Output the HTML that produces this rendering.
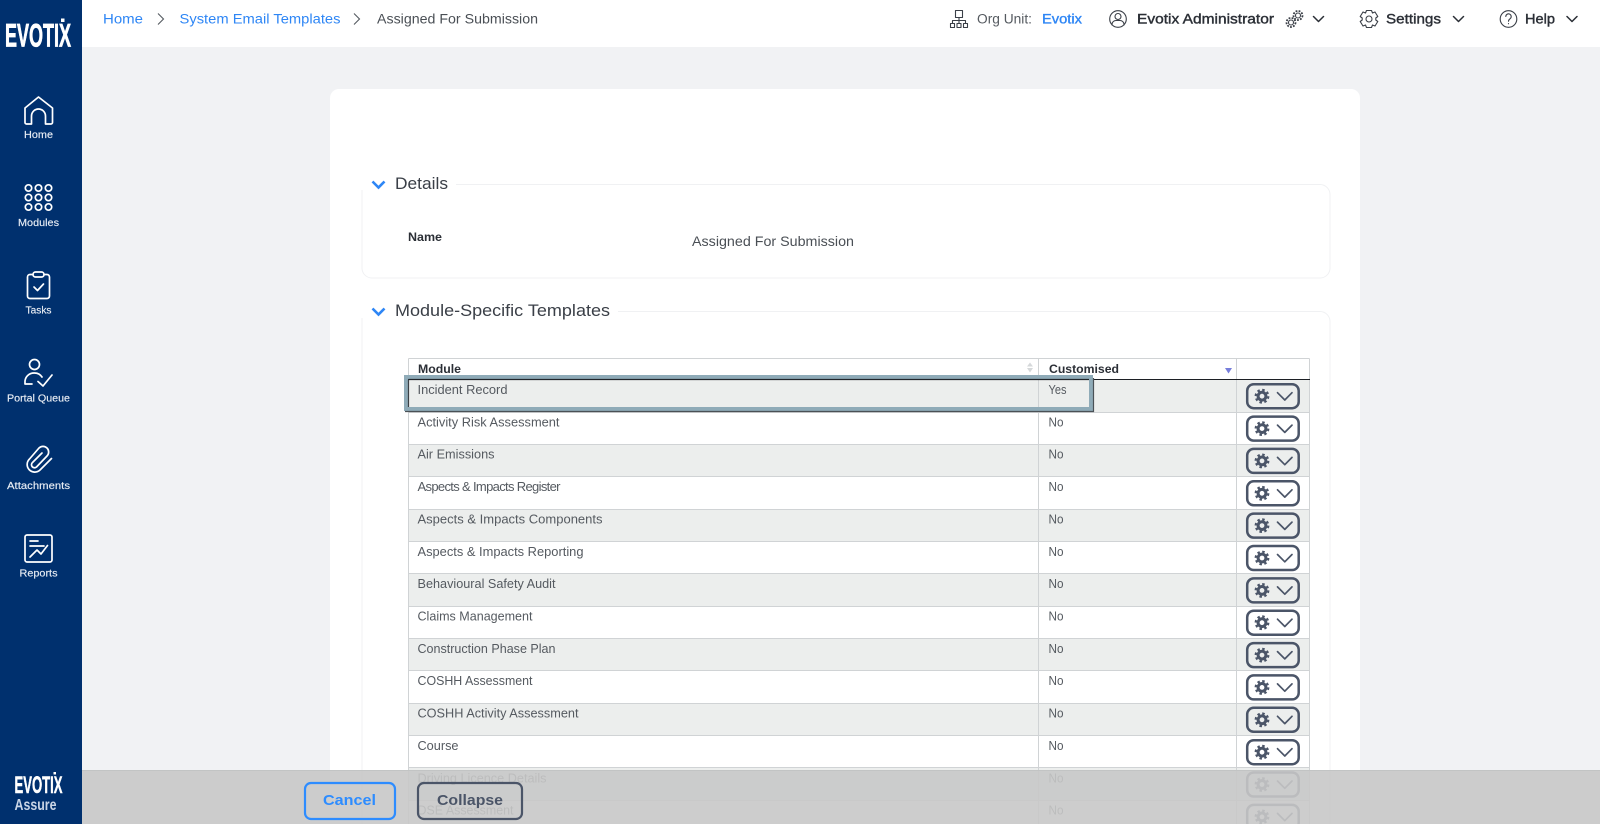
<!DOCTYPE html>
<html><head><meta charset="utf-8"><title>Assigned For Submission</title>
<style>
html,body{margin:0;padding:0;width:1600px;height:824px;overflow:hidden;background:#f1f2f4}
svg{display:block}
text{font-family:"Liberation Sans",sans-serif}
.nav{fill:#e8edf4;font-size:10.5px;text-anchor:middle;stroke:#e8edf4;stroke-width:.15}
.ic{fill:none;stroke:#fff;stroke-width:1.7;stroke-linecap:round;stroke-linejoin:round}
.t{fill:#555a60;font-size:12.5px}
.top{fill:#2b2f36;font-size:13.5px}
.topb{fill:#2b2f36;font-size:13.5px;stroke:#2b2f36;stroke-width:.4}
.link{fill:#2e86f5;font-size:13.5px}
.hi{fill:none;stroke:#3a3f47;stroke-width:1.1;stroke-linecap:round;stroke-linejoin:round}
.chev{fill:none;stroke:#2b2f36;stroke-width:1.5;stroke-linecap:round;stroke-linejoin:round}
.l{stroke:#d0d3d5;stroke-width:1}
</style></head><body>
<svg width="1600" height="824" viewBox="0 0 1600 824" xmlns="http://www.w3.org/2000/svg">
<defs>
<g id="btn">
<rect x="1247.2" y="0" width="51.5" height="24" rx="6.5" fill="none" stroke="#4b5568" stroke-width="2.5"/>
<circle cx="1262" cy="12" r="3.9" fill="none" stroke="#4b5568" stroke-width="3"/>
<circle cx="1262" cy="12" r="6.3" fill="none" stroke="#4b5568" stroke-width="2.2" stroke-dasharray="2.5 2.45"/>
<path d="M1277.5 8.5L1284.8 15.8L1292 8.5" fill="none" stroke="#4b5568" stroke-width="1.7" stroke-linecap="round" stroke-linejoin="round"/>
</g>
</defs>

<rect width="1600" height="824" fill="#f1f2f4"/>
<rect x="82" width="1518" height="47" fill="#fff"/>
<rect x="330" y="89" width="1030" height="760" rx="9" fill="#fff"/>

<!-- fieldsets -->
<path d="M456 184.500H1320a10 10 0 0 1 10 10V268a10 10 0 0 1 -10 10H372a10 10 0 0 1 -10 -10V190" fill="none" stroke="#f0f1f3" stroke-width="1"/>
<path d="M618 311.500H1320a10 10 0 0 1 10 10V830M362 830V318" fill="none" stroke="#f0f1f3" stroke-width="1"/>
<path d="M372.500 181.500L378.500 187.500L384.500 181.500M372.500 308.500L378.500 314.500L384.500 308.500" fill="none" stroke="#2e86f5" stroke-width="2.600"/>
<text x="395" y="189" font-size="16.500" fill="#3a3f47" textLength="53" lengthAdjust="spacingAndGlyphs">Details</text>
<text x="395" y="316" font-size="16.500" fill="#3a3f47" textLength="215" lengthAdjust="spacingAndGlyphs">Module-Specific Templates</text>
<text x="408" y="241" font-size="12" font-weight="bold" fill="#2b2f36" textLength="34" lengthAdjust="spacingAndGlyphs">Name</text>
<text x="692" y="246" font-size="13.500" fill="#4a4f55" textLength="162" lengthAdjust="spacingAndGlyphs">Assigned For Submission</text>

<!-- table -->
<rect x="408.500" y="358.500" width="901" height="21" fill="#fff"/>
<rect x="408.500" y="380" width="901" height="32" fill="#eceeed"/>
<rect x="408.500" y="445" width="901" height="32" fill="#eceeed"/>
<rect x="408.500" y="510" width="901" height="32" fill="#eceeed"/>
<rect x="408.500" y="574" width="901" height="32" fill="#eceeed"/>
<rect x="408.500" y="639" width="901" height="32" fill="#eceeed"/>
<rect x="408.500" y="704" width="901" height="32" fill="#eceeed"/>
<rect x="408.500" y="768" width="901" height="32" fill="#eceeed"/>
<g class="l">
<path d="M408.500 358.500H1309.500M408.500 358.500V830M1038.500 358.500V830M1236.500 358.500V830M1309.500 358.500V830"/>
<path d="M408.500 412.500H1309.500M408.500 444.500H1309.500M408.500 476.500H1309.500M408.500 509.500H1309.500M408.500 541.500H1309.500M408.500 573.500H1309.500M408.500 606.500H1309.500M408.500 638.500H1309.500M408.500 670.500H1309.500M408.500 703.500H1309.500M408.500 735.500H1309.500M408.500 767.500H1309.500M408.500 800.500H1309.500"/>
</g>
<path d="M408 379.500H1310" stroke="#1c1f24" stroke-width="1.100"/>
<text x="418" y="373" font-size="12" font-weight="bold" fill="#2b2f36" textLength="43" lengthAdjust="spacingAndGlyphs">Module</text>
<text x="1049" y="373" font-size="12" font-weight="bold" fill="#2b2f36" textLength="70" lengthAdjust="spacingAndGlyphs">Customised</text>
<path d="M1030 362.500L1033 366.500H1027ZM1030 372.500L1033 368H1027Z" fill="#d5d8da"/>
<path d="M1225 368H1232L1228.500 373.500Z" fill="#777edb"/>

<g class="t">
<text x="417.500" y="394" textLength="90" lengthAdjust="spacingAndGlyphs">Incident Record</text><text x="1048.500" y="394" textLength="18" lengthAdjust="spacingAndGlyphs">Yes</text>
<text x="417.500" y="426.400" textLength="142" lengthAdjust="spacingAndGlyphs">Activity Risk Assessment</text><text x="1048.500" y="426.400" textLength="15" lengthAdjust="spacingAndGlyphs">No</text>
<text x="417.500" y="458.700" textLength="77" lengthAdjust="spacingAndGlyphs">Air Emissions</text><text x="1048.500" y="458.700" textLength="15" lengthAdjust="spacingAndGlyphs">No</text>
<text x="417.500" y="491.100" font-size="13" textLength="143" lengthAdjust="spacing">Aspects &amp; Impacts Register</text><text x="1048.500" y="491.100" textLength="15" lengthAdjust="spacingAndGlyphs">No</text>
<text x="417.500" y="523.400" textLength="185" lengthAdjust="spacingAndGlyphs">Aspects &amp; Impacts Components</text><text x="1048.500" y="523.400" textLength="15" lengthAdjust="spacingAndGlyphs">No</text>
<text x="417.500" y="555.800" textLength="166" lengthAdjust="spacingAndGlyphs">Aspects &amp; Impacts Reporting</text><text x="1048.500" y="555.800" textLength="15" lengthAdjust="spacingAndGlyphs">No</text>
<text x="417.500" y="588.200" textLength="138" lengthAdjust="spacingAndGlyphs">Behavioural Safety Audit</text><text x="1048.500" y="588.200" textLength="15" lengthAdjust="spacingAndGlyphs">No</text>
<text x="417.500" y="620.500" textLength="115" lengthAdjust="spacingAndGlyphs">Claims Management</text><text x="1048.500" y="620.500" textLength="15" lengthAdjust="spacingAndGlyphs">No</text>
<text x="417.500" y="652.900" textLength="138" lengthAdjust="spacingAndGlyphs">Construction Phase Plan</text><text x="1048.500" y="652.900" textLength="15" lengthAdjust="spacingAndGlyphs">No</text>
<text x="417.500" y="685.200" textLength="115" lengthAdjust="spacingAndGlyphs">COSHH Assessment</text><text x="1048.500" y="685.200" textLength="15" lengthAdjust="spacingAndGlyphs">No</text>
<text x="417.500" y="717.600" textLength="161" lengthAdjust="spacingAndGlyphs">COSHH Activity Assessment</text><text x="1048.500" y="717.600" textLength="15" lengthAdjust="spacingAndGlyphs">No</text>
<text x="417.500" y="750" textLength="41" lengthAdjust="spacingAndGlyphs">Course</text><text x="1048.500" y="750" textLength="15" lengthAdjust="spacingAndGlyphs">No</text>
<text x="417.500" y="782.300" textLength="129" lengthAdjust="spacingAndGlyphs">Driving Licence Details</text><text x="1048.500" y="782.300" textLength="15" lengthAdjust="spacingAndGlyphs">No</text>
<text x="417.500" y="814.700" textLength="96" lengthAdjust="spacingAndGlyphs">DSE Assessment</text><text x="1048.500" y="814.700" textLength="15" lengthAdjust="spacingAndGlyphs">No</text>
</g>
<use href="#btn" y="384.200"/><use href="#btn" y="416.600"/><use href="#btn" y="448.900"/><use href="#btn" y="481.300"/><use href="#btn" y="513.600"/><use href="#btn" y="546"/><use href="#btn" y="578.400"/><use href="#btn" y="610.700"/><use href="#btn" y="643.100"/><use href="#btn" y="675.400"/><use href="#btn" y="707.800"/><use href="#btn" y="740.200"/><use href="#btn" y="772.500"/><use href="#btn" y="804.900"/>

<!-- highlight -->
<rect x="406" y="377" width="685" height="32" fill="none" stroke="#8fabb8" stroke-width="4"/>
<path d="M408.500 379.500H1089" stroke="#22262b" stroke-width="1.200" fill="none"/>
<path d="M408.500 379.500V407" stroke="#3b4045" stroke-width="1.200" fill="none"/>
<path d="M405 411.500H1093.500V378" stroke="#4a5156" stroke-width="1.200" fill="none"/>

<!-- bottom overlay -->
<rect x="82" y="770" width="1518" height="54" fill="#c8c8c8" fill-opacity=".9"/>
<rect x="82" y="770" width="1518" height="1" fill="#c2c4c4"/>
<rect x="305" y="783" width="90" height="36" rx="6" fill="none" stroke="#2d8cff" stroke-width="2.200"/>
<text x="323" y="805" font-size="15" font-weight="bold" fill="#2d8cff" textLength="53" lengthAdjust="spacingAndGlyphs">Cancel</text>
<rect x="418" y="783" width="104" height="36" rx="6" fill="none" stroke="#4b5568" stroke-width="2.200"/>
<text x="437" y="805" font-size="15" font-weight="bold" fill="#4b5568" textLength="66" lengthAdjust="spacingAndGlyphs">Collapse</text>

<!-- sidebar -->
<rect width="82" height="824" fill="#00306e"/>
<text x="5" y="46.500" font-size="32" font-weight="bold" fill="#fff" stroke="#fff" stroke-width=".8" textLength="66" lengthAdjust="spacingAndGlyphs">EVOTIX</text>
<rect x="61" y="18.500" width="3.500" height="3.500" fill="#fff"/>
<g class="ic">
<path d="M25 122.500V108L38.500 97L52.500 108V122.500a1.500 1.500 0 0 1 -1.500 1.500H45.500V116a7 7 0 0 0 -14 0V124H26.500a1.500 1.500 0 0 1 -1.500 -1.500Z"/>
<circle cx="28.500" cy="188" r="3.200"/><circle cx="38.500" cy="188" r="3.200"/><circle cx="48.500" cy="188" r="3.200"/>
<circle cx="28.500" cy="197.500" r="3.200"/><circle cx="38.500" cy="197.500" r="3.200"/><circle cx="48.500" cy="197.500" r="3.200"/>
<circle cx="28.500" cy="207" r="3.200"/><circle cx="38.500" cy="207" r="3.200"/><circle cx="48.500" cy="207" r="3.200"/>
<path d="M33 274.500H30a2.500 2.500 0 0 0 -2.500 2.500V296a2.500 2.500 0 0 0 2.500 2.500H47a2.500 2.500 0 0 0 2.500 -2.500V277a2.500 2.500 0 0 0 -2.500 -2.500H44"/>
<rect x="33" y="272" width="11" height="5" rx="2.500"/>
<path d="M34 287L37.500 290.500L43.500 284"/>
<circle cx="34.500" cy="364.500" r="5"/>
<path d="M25 384V381a9 9 0 0 1 9 -8a9 9 0 0 1 8 4M25 384H32"/>
<path d="M38 381.500L43 386L52 375"/>
<path d="M42 453L32.500 462.500a3 3 0 0 0 4 4.500L47 456a5.500 5.500 0 0 0 -8 -8L29.500 459a7.500 7.500 0 0 0 10.500 11L51.500 458.500"/>
<rect x="25" y="535" width="27" height="27" rx="2"/>
<path d="M30 541H38M30 546H44M30 557L37 550L41 554L47.500 545.500"/>
</g>
<g class="nav">
<text x="38.500" y="138" textLength="29" lengthAdjust="spacingAndGlyphs">Home</text>
<text x="38.500" y="226" textLength="41" lengthAdjust="spacingAndGlyphs">Modules</text>
<text x="38.500" y="313.500" textLength="26" lengthAdjust="spacingAndGlyphs">Tasks</text>
<text x="38.500" y="401.500" textLength="63" lengthAdjust="spacingAndGlyphs">Portal Queue</text>
<text x="38.500" y="489" textLength="63" lengthAdjust="spacingAndGlyphs">Attachments</text>
<text x="38.500" y="576.500" textLength="38" lengthAdjust="spacingAndGlyphs">Reports</text>
</g>
<text x="14.500" y="793" font-size="24" font-weight="bold" fill="#fff" stroke="#fff" stroke-width=".5" textLength="48" lengthAdjust="spacingAndGlyphs">EVOTIX</text>
<rect x="53.500" y="772" width="2.500" height="2.500" fill="#fff"/>
<text x="14.500" y="810" font-size="15.500" font-weight="bold" fill="#c9d5e6" textLength="42" lengthAdjust="spacingAndGlyphs">Assure</text>

<!-- breadcrumb -->
<text class="link" x="103" y="23.500" textLength="40" lengthAdjust="spacingAndGlyphs">Home</text>
<path d="M158 13.500L163.500 19L158 24.500" fill="none" stroke="#555a60" stroke-width="1.100"/>
<text class="link" x="179.500" y="23.500" textLength="161" lengthAdjust="spacingAndGlyphs">System Email Templates</text>
<path d="M354 13.500L359.500 19L354 24.500" fill="none" stroke="#555a60" stroke-width="1.100"/>
<text x="377" y="23.500" font-size="13.500" fill="#4a4f55" textLength="161" lengthAdjust="spacingAndGlyphs">Assigned For Submission</text>

<!-- top right -->
<g class="hi">
<rect x="955.500" y="10.500" width="7" height="7"/>
<path d="M959 17.500V20.500M952.500 23V20.500H965.500V23M959 20.500V23"/>
<rect x="950.500" y="23.500" width="4" height="4"/><rect x="957" y="23.500" width="4" height="4"/><rect x="963.500" y="23.500" width="4" height="4"/>
<circle cx="1118" cy="19" r="8.300"/><circle cx="1118" cy="16.500" r="3"/>
<path d="M1112 25V24a4 4 0 0 1 4 -3.500H1120a4 4 0 0 1 4 3.500V25"/>
<circle cx="1298" cy="15.500" r="2.500"/><circle cx="1298" cy="15.500" r="4.500" stroke-dasharray="1.800 1.300" stroke-width="1.800" stroke-linecap="butt"/>
<circle cx="1291" cy="22.500" r="2.500"/><circle cx="1291" cy="22.500" r="4.500" stroke-dasharray="1.800 1.300" stroke-width="1.800" stroke-linecap="butt"/>
<circle cx="1369" cy="19" r="3"/>
<path d="M1366.500 10.500H1371.500L1372.500 13L1375 12L1377.800 16.500L1375.800 18L1375.800 20L1377.800 21.500L1375 26L1372.500 25L1371.500 27.500H1366.500L1365.500 25L1363 26L1360.200 21.500L1362.200 20L1362.200 18L1360.200 16.500L1363 12L1365.500 13Z"/>
<circle cx="1508.500" cy="19" r="8.300"/>
<path d="M1505.800 16.500a2.700 2.700 0 1 1 4.200 2.300c-1 .7 -1.500 1.200 -1.500 2.500"/><path d="M1508.500 23.500v.3"/>
</g>
<text x="977" y="23.500" font-size="13.500" fill="#555a60" textLength="55" lengthAdjust="spacingAndGlyphs">Org Unit:</text>
<text x="1042" y="23.500" font-size="13.500" fill="#2e86f5" stroke="#2e86f5" stroke-width=".35" textLength="40" lengthAdjust="spacingAndGlyphs">Evotix</text>
<text class="topb" x="1137" y="23.500" textLength="137" lengthAdjust="spacingAndGlyphs">Evotix Administrator</text>
<text class="topb" x="1386" y="23.500" textLength="55" lengthAdjust="spacingAndGlyphs">Settings</text>
<text class="topb" x="1525" y="23.500" textLength="30" lengthAdjust="spacingAndGlyphs">Help</text>
<path class="chev" d="M1313.500 16.500L1318.500 21.500L1323.500 16.500M1453.500 16.500L1458.500 21.500L1463.500 16.500M1567 16.500L1572 21.500L1577 16.500"/>
</svg>
</body></html>
